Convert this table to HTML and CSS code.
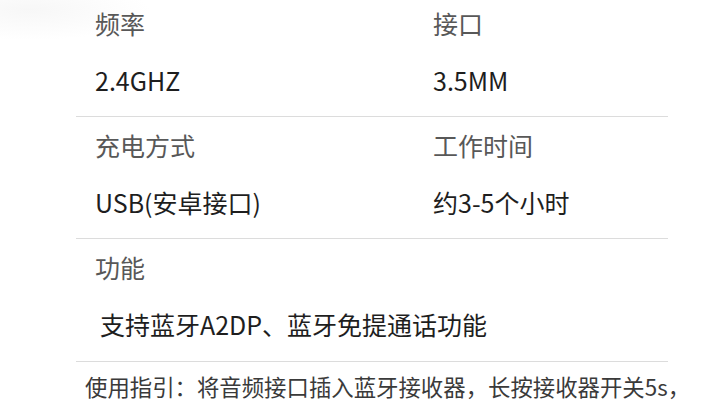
FILE: index.html
```html
<!DOCTYPE html>
<html lang="zh-CN">
<head>
<meta charset="utf-8">
<title>参数</title>
<link rel="stylesheet" href="styles.css">
</head>
<body>
<div class="page">
  <div class="specs">
    <div class="row">
      <div class="cell">
        <div class="label">频率</div>
        <div class="value">2.4GHZ</div>
      </div>
      <div class="cell">
        <div class="label">接口</div>
        <div class="value">3.5MM</div>
      </div>
    </div>
    <div class="row">
      <div class="cell">
        <div class="label">充电方式</div>
        <div class="value">USB(安卓接口)</div>
      </div>
      <div class="cell">
        <div class="label">工作时间</div>
        <div class="value">约3-5个小时</div>
      </div>
    </div>
    <div class="row row-single">
      <div class="cell">
        <div class="label">功能</div>
        <div class="value value-indent">支持蓝牙A2DP、蓝牙免提通话功能</div>
      </div>
    </div>
  </div>
  <p class="guide">使用指引：将音频接口插入蓝牙接收器，长按接收器开关5s，</p>
</div>
</body>
</html>
```
FILE: styles.css
```css
html, body {
  margin: 0;
  padding: 0;
  background: #ffffff;
}
body {
  font-family: "Noto Sans CJK SC", "Noto Sans", sans-serif;
  overflow: hidden;
}
.page {
  width: 719px;
  height: 400px;
  overflow: hidden;
  background: radial-gradient(ellipse 120px 30px at 30px 10px, #f7f7f7, rgba(255,255,255,0)), #fff;
}
.specs {
  margin: -5px 0 0 76px;
  width: 592px;
}
.row {
  display: grid;
  grid-template-columns: 338px 1fr;
  height: 122px;
  border-bottom: 1.5px solid #dcdcdc;
  box-sizing: border-box;
}
.row-single {
  grid-template-columns: 1fr;
  height: 123px;
}
.cell {
  padding: 10px 0 0 19px;
}
.label {
  font-size: 25px;
  line-height: 36px;
  color: #585858;
}
.value {
  margin-top: 21px;
  font-size: 25px;
  line-height: 36px;
  color: #1e1e1e;
}
.value-indent {
  padding-left: 5px;
}
.guide {
  margin: 7px 0 0 85px;
  font-size: 22.4px;
  line-height: 34px;
  color: #3a3a3a;
  white-space: nowrap;
}
```
